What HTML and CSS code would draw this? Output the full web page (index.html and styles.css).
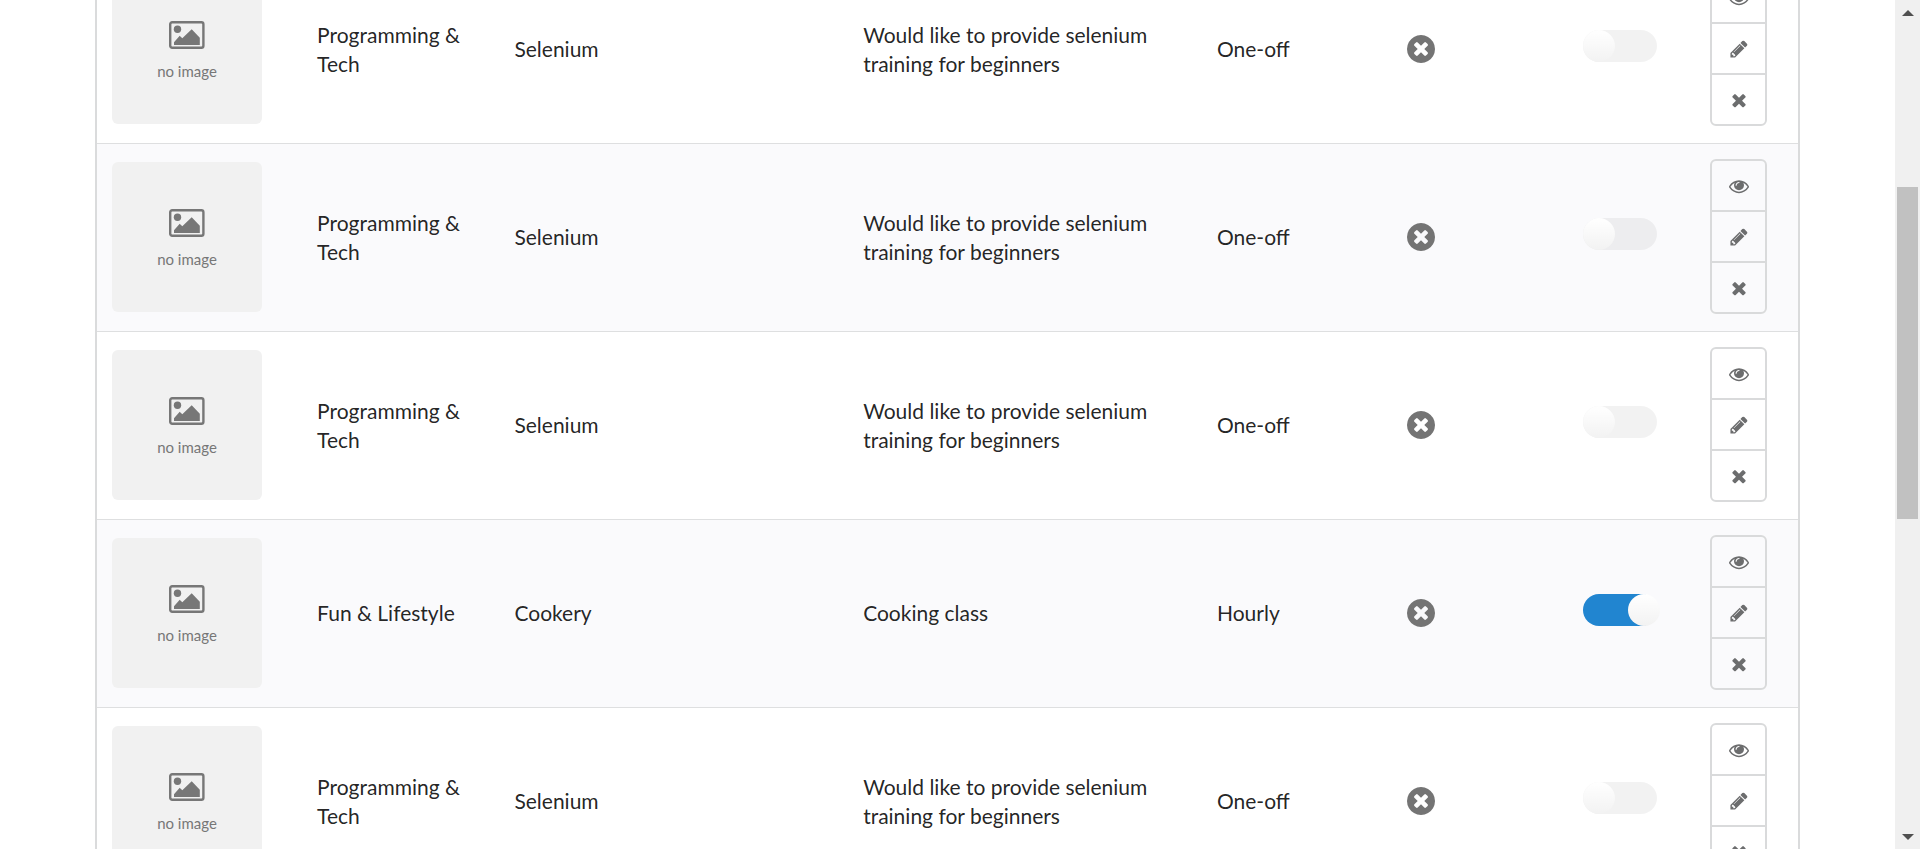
FILE: index.html
```html
<!DOCTYPE html>
<html lang="en">
<head>
<meta charset="utf-8">
<title>Manage Listings</title>
<link rel="stylesheet" href="styles.css">
</head>
<body>
<svg class="sprite" aria-hidden="true">
  <symbol id="eye" viewBox="0 0 1792 1792"><path d="M1664 960q-152-236-381-353 61 104 61 225 0 185-131.5 316.5t-316.5 131.5-316.5-131.5-131.5-316.5q0-121 61-225-229 117-381 353 133 205 333.5 326.5t434.5 121.5 434.5-121.5 333.5-326.5zm-720-384q0-20-14-34t-34-14q-125 0-214.5 89.5t-89.5 214.5q0 20 14 34t34 14 34-14 14-34q0-86 61-147t147-61q20 0 34-14t14-34zm848 384q0 34-20 69-140 230-376.5 368.5t-499.5 138.5-499.5-139-376.5-368q-20-35-20-69t20-69q140-229 376.5-368t499.5-139 499.5 139 376.5 368q20 35 20 69z"/></symbol>
  <symbol id="pencil" viewBox="0 0 1792 1792"><path d="M491 1536l91-91-235-235-91 91v107h128v128h107zm523-928q0-22-22-22-10 0-17 7l-542 542q-7 7-7 17 0 22 22 22 10 0 17-7l542-542q7-7 7-17zm-54-192l416 416-832 832h-416v-416zm683 96q0 53-37 90l-166 166-416-416 166-165q36-38 90-38 53 0 91 38l235 234q37 39 37 91z"/></symbol>
  <symbol id="times" viewBox="0 0 1792 1792"><path d="M1490 1322q0 40-28 68l-136 136q-28 28-68 28t-68-28l-294-294-294 294q-28 28-68 28t-68-28l-136-136q-28-28-28-68t28-68l294-294-294-294q-28-28-28-68t28-68l136-136q28-28 68-28t68 28l294 294 294-294q28-28 68-28t68 28l136 136q28 28 28 68t-28 68l-294 294 294 294q28 28 28 68z"/></symbol>
  <symbol id="times-circle" viewBox="0 128 1536 1536"><path d="M1149 1122q0-26-19-45l-181-181 181-181q19-19 19-45 0-27-19-46l-90-90q-19-19-46-19-26 0-45 19l-181 181-181-181q-19-19-45-19-27 0-46 19l-90 90q-19 19-19 46 0 26 19 45l181 181-181 181q-19 19-19 45 0 27 19 46l90 90q19 19 46 19 26 0 45-19l181-181 181 181q19 19 45 19 27 0 46-19l90-90q19-19 19-46zm387-226q0 209-103 385.5t-279.5 279.5-385.5 103-385.5-103-279.5-279.5-103-385.5 103-385.5 279.5-279.5 385.5-103 385.5 103 279.5 279.5 103 385.5z"/></symbol>
  <symbol id="picture" viewBox="0 0 36 28"><rect x="1.2" y="1.2" width="33.2" height="25.6" rx="2" fill="none" stroke="currentColor" stroke-width="2.4"/><circle cx="8.5" cy="8.3" r="3.7"/><path d="M5 21.3L10.7 14.7L13.3 17.3L22.7 8.3L30.8 16.7V24H5Z"/></symbol>
</svg>
<div class="window">
  <main class="content">
    <table class="listings">
      <colgroup>
        <col class="col-image"><col class="col-category"><col class="col-title"><col class="col-description"><col class="col-type"><col class="col-trade"><col class="col-active"><col class="col-actions">
      </colgroup>
      <tbody>
        <tr>
          <td><div class="thumb"><svg class="thumb-icon"><use href="#picture"/></svg><span>no image</span></div></td>
          <td>Programming &amp; Tech</td>
          <td>Selenium</td>
          <td>Would like to provide selenium training for beginners</td>
          <td>One-off</td>
          <td><svg class="status"><use href="#times-circle"/></svg></td>
          <td><input class="switch" type="checkbox" aria-label="Active"></td>
          <td><div class="actions"><button type="button" aria-label="View"><svg><use href="#eye"/></svg></button><button type="button" aria-label="Edit"><svg><use href="#pencil"/></svg></button><button type="button" aria-label="Delete"><svg><use href="#times"/></svg></button></div></td>
        </tr>
        <tr>
          <td><div class="thumb"><svg class="thumb-icon"><use href="#picture"/></svg><span>no image</span></div></td>
          <td>Programming &amp; Tech</td>
          <td>Selenium</td>
          <td>Would like to provide selenium training for beginners</td>
          <td>One-off</td>
          <td><svg class="status"><use href="#times-circle"/></svg></td>
          <td><input class="switch" type="checkbox" aria-label="Active"></td>
          <td><div class="actions"><button type="button" aria-label="View"><svg><use href="#eye"/></svg></button><button type="button" aria-label="Edit"><svg><use href="#pencil"/></svg></button><button type="button" aria-label="Delete"><svg><use href="#times"/></svg></button></div></td>
        </tr>
        <tr>
          <td><div class="thumb"><svg class="thumb-icon"><use href="#picture"/></svg><span>no image</span></div></td>
          <td>Programming &amp; Tech</td>
          <td>Selenium</td>
          <td>Would like to provide selenium training for beginners</td>
          <td>One-off</td>
          <td><svg class="status"><use href="#times-circle"/></svg></td>
          <td><input class="switch" type="checkbox" aria-label="Active"></td>
          <td><div class="actions"><button type="button" aria-label="View"><svg><use href="#eye"/></svg></button><button type="button" aria-label="Edit"><svg><use href="#pencil"/></svg></button><button type="button" aria-label="Delete"><svg><use href="#times"/></svg></button></div></td>
        </tr>
        <tr>
          <td><div class="thumb"><svg class="thumb-icon"><use href="#picture"/></svg><span>no image</span></div></td>
          <td>Fun &amp; Lifestyle</td>
          <td>Cookery</td>
          <td>Cooking class</td>
          <td>Hourly</td>
          <td><svg class="status"><use href="#times-circle"/></svg></td>
          <td><input class="switch" type="checkbox" aria-label="Active" checked></td>
          <td><div class="actions"><button type="button" aria-label="View"><svg><use href="#eye"/></svg></button><button type="button" aria-label="Edit"><svg><use href="#pencil"/></svg></button><button type="button" aria-label="Delete"><svg><use href="#times"/></svg></button></div></td>
        </tr>
        <tr>
          <td><div class="thumb"><svg class="thumb-icon"><use href="#picture"/></svg><span>no image</span></div></td>
          <td>Programming &amp; Tech</td>
          <td>Selenium</td>
          <td>Would like to provide selenium training for beginners</td>
          <td>One-off</td>
          <td><svg class="status"><use href="#times-circle"/></svg></td>
          <td><input class="switch" type="checkbox" aria-label="Active"></td>
          <td><div class="actions"><button type="button" aria-label="View"><svg><use href="#eye"/></svg></button><button type="button" aria-label="Edit"><svg><use href="#pencil"/></svg></button><button type="button" aria-label="Delete"><svg><use href="#times"/></svg></button></div></td>
        </tr>
      </tbody>
    </table>
  </main>
  <div class="scrollbar">
    <button type="button" class="arrow" aria-label="Scroll up"><svg viewBox="0 0 12 6"><path d="M0 6L6 0L12 6Z"/></svg></button>
    <div class="track"><div class="before"></div><div class="handle"></div><div class="after"></div></div>
    <button type="button" class="arrow" aria-label="Scroll down"><svg viewBox="0 0 12 6"><path d="M0 0H12L6 6Z"/></svg></button>
  </div>
</div>
</body>
</html>
```
FILE: styles.css
```css
* {
  box-sizing: border-box;
}

body {
  margin: 0;
  background: #fff;
  color: rgba(0, 0, 0, 0.87);
  font-family: Lato, "Liberation Sans", sans-serif;
  font-size: 21px;
  line-height: 29px;
}

svg {
  display: block;
  fill: currentColor;
}

.sprite {
  display: none;
}

button {
  margin: 0;
  border: 0;
  background: none;
  color: inherit;
  font: inherit;
}

.window {
  display: flex;
  height: 100vh;
  overflow: hidden;
}

.content {
  flex: 1;
  min-width: 0;
  padding: 0 95px;
}

/* The list is scrolled part of the way into its first visible row */
.listings {
  width: 100%;
  margin-top: -45px;
  table-layout: fixed;
  border-collapse: separate;
  border-spacing: 0;
  border: solid #dadbdc;
  border-width: 0 2px;
}

.col-image { width: 12%; }
.col-category { width: 11.6%; }
.col-title { width: 20.5%; }
.col-description { width: 20.8%; }
.col-type { width: 11.2%; }
.col-trade { width: 10.3%; }
.col-active { width: 7.5%; }
.col-actions { width: 6.1%; }

.listings td {
  padding: 15px 16px 17px;
  border-top: 1px solid #dedfe0;
  vertical-align: middle;
}

.listings td:first-child {
  padding-left: 15px;
}

.listings tr:nth-child(even) {
  background: #fafafc;
}

.thumb {
  display: flex;
  flex-direction: column;
  align-items: center;
  gap: 12px;
  width: 150px;
  height: 150px;
  padding-top: 47px;
  border-radius: 6px;
  background: #f1f1f1;
  color: #777;
  font-size: 15px;
  line-height: 20px;
}

.thumb-icon {
  width: 36px;
  height: 28px;
}

.status {
  width: 28px;
  height: 28px;
  color: #747474;
}

.switch {
  display: block;
  appearance: none;
  width: 74px;
  height: 32px;
  margin: 0 0 6px;
  border-radius: 16px;
  background: rgba(0, 0, 0, 0.05);
}

.switch::before {
  content: "";
  display: block;
  width: 32px;
  height: 32px;
  border-radius: 50%;
  background: #fff linear-gradient(transparent, rgba(0, 0, 0, 0.05));
}

.switch:checked {
  background: #2185d0;
}

.switch:checked::before {
  margin-left: 45px;
}

.actions {
  display: flex;
  flex-direction: column;
  width: 57px;
  border: 2px solid #d9dadb;
  border-radius: 6px;
}

.actions button {
  display: flex;
  align-items: center;
  justify-content: center;
  height: 51px;
  padding: 0;
  border-bottom: 2px solid #d9dadb;
  color: #6c6d6e;
}

.actions button:last-child {
  height: 49px;
  border-bottom: 0;
}

.actions svg {
  width: 20px;
  height: 20px;
}

.scrollbar {
  display: flex;
  flex-direction: column;
  width: 25px;
  background: #f0f0f0;
}

.arrow {
  display: flex;
  align-items: center;
  justify-content: center;
  height: 25px;
  padding: 0;
  color: #505050;
}

.arrow svg {
  width: 12px;
  height: 6px;
}

.track {
  display: flex;
  flex: 1;
  flex-direction: column;
  padding: 0 2px;
}

.before { flex: 162; }
.handle { flex: 332; background: #c1c1c1; }
.after { flex: 305; }
```
